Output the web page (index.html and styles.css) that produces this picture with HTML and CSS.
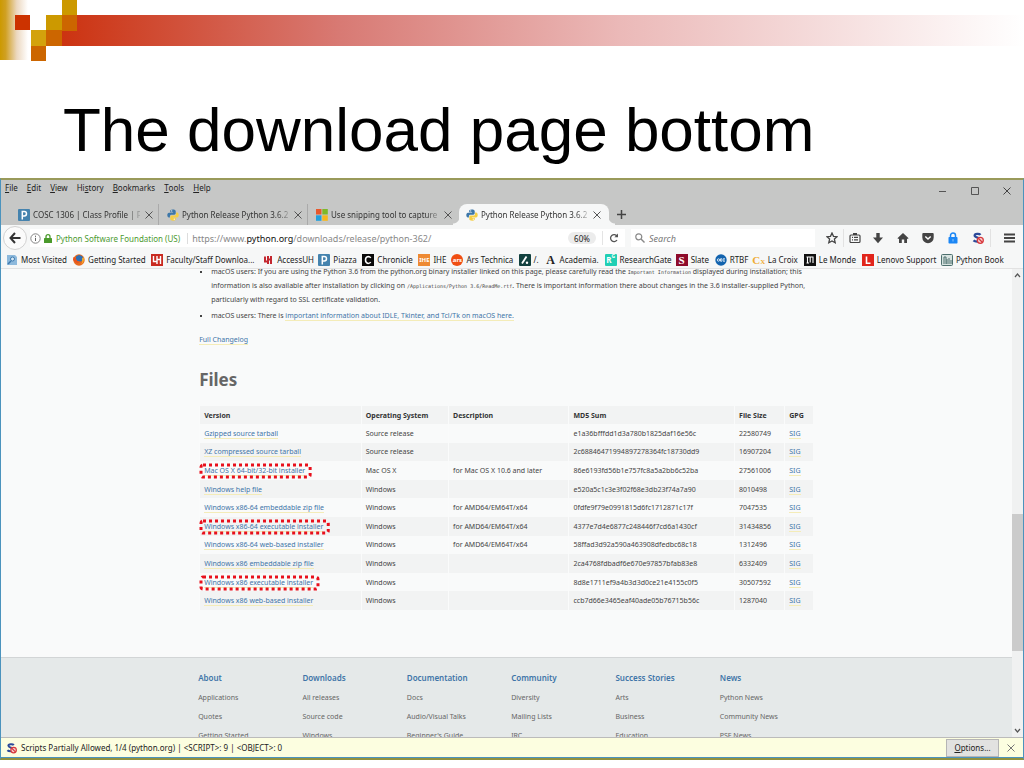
FILE: index.html
```html
<!DOCTYPE html>
<html lang="en">
<head>
<meta charset="utf-8">
<title>The download page bottom</title>
<link rel="stylesheet" href="styles.css">
</head>
<body>
<svg class="defs" aria-hidden="true">
  <symbol id="python" viewBox="0 0 12 12">
    <path fill="#3d77a8" d="M5.800.400C3.400.400 3.200 1.200 3.200 2v1.200h2.900v.500H2C.900 3.700.300 4.700.300 6.100s.600 2.500 1.600 2.500h1V7.200c0-.900.700-1.500 1.500-1.500h2.900c.800 0 1.400-.600 1.400-1.400V2C8.700 1 7.600.400 5.800.400z"/>
    <path fill="#f5cf45" d="M6.200 11.700c2.400 0 2.600-.8 2.600-1.600V8.900H5.900v-.5H10c1.100 0 1.700-1 1.700-2.400S11.100 3.500 10.100 3.500h-1v1.400c0 .9-.7 1.500-1.500 1.500H4.700c-.8 0-1.400.6-1.400 1.400v2.300c0 1 1.100 1.600 2.900 1.600z"/>
    <circle cx="4.700" cy="1.900" r=".6" fill="#fff"/><circle cx="7.300" cy="10.200" r=".6" fill="#fff"/>
  </symbol>
  <symbol id="piazza" viewBox="0 0 12 12">
    <rect width="12" height="12" rx="1" fill="#4583ae"/>
    <path d="M4.300 10.500V2.500h2a2.200 2.200 0 0 1 0 4.400H4.300" fill="none" stroke="#fff" stroke-width="1.500"/>
  </symbol>
  <symbol id="close" viewBox="0 0 8 8"><path d="M.5.5l7 7M7.500.5l-7 7" stroke="currentColor" fill="none"/></symbol>
  <symbol id="noscript" viewBox="0 0 12 12">
    <path d="M8.500 2.800C7.500 1.400 2.600 1.300 2.600 3.600S8.400 5.400 8.400 7.800 3 9.900 1.500 8.400" fill="none" stroke="#2c4a9a" stroke-width="2.200"/>
    <circle cx="8.300" cy="8.300" r="3" fill="#f6d5d5" stroke="#d8393d" stroke-width="1.300"/>
    <path d="M6.300 6.300l4 4" stroke="#d8393d" stroke-width="1.300"/>
  </symbol>
</svg>

<main class="slide">
  <header class="slide-head">
    <svg class="blocks" width="78" height="62" viewBox="0 0 78 62" aria-hidden="true">
      <defs><linearGradient id="gold"><stop offset="0" stop-color="#cc9900"/><stop offset=".2" stop-color="#d0a022"/><stop offset=".6" stop-color="#ecd8c0"/><stop offset="1" stop-color="#fff"/></linearGradient></defs>
      <rect width="28" height="60" fill="url(#gold)"/>
      <path fill="#cc3300" d="M15 15h15v15H15z"/>
      <path fill="#cc9900" d="M62 0h15v15H62zM46 15h16v15H46z"/>
      <path fill="#d3a20c" d="M31 30h15v16H31z"/>
      <path fill="#cc6600" d="M62 15h15v16H62zM46 30h16v16H46zM31 46h15v15H31z"/>
    </svg>
    <div class="bar"></div>
  </header>
  <h1 class="title">The download page bottom</h1>

  <section class="browser">
    <div class="chrome">
      <div class="menubar">
        <nav class="menus">
          <button><u>F</u>ile</button><button><u>E</u>dit</button><button><u>V</u>iew</button><button>Hi<u>s</u>tory</button><button><u>B</u>ookmarks</button><button><u>T</u>ools</button><button><u>H</u>elp</button>
        </nav>
        <div class="win">
          <button aria-label="Minimize"><svg width="8" height="8"><path d="M0 4.500h7" stroke="#555"/></svg></button>
          <button aria-label="Maximize"><svg width="8" height="8"><path d="M.5.5h7v7h-7z" fill="none" stroke="#555"/></svg></button>
          <button aria-label="Close window"><svg width="8" height="8"><use href="#close"/></svg></button>
        </div>
      </div>
      <div class="tabs">
        <div class="tab"><svg class="ico"><use href="#piazza"/></svg><span>COSC 1306 | Class Profile | P</span><button aria-label="Close tab"><svg width="8" height="8"><use href="#close"/></svg></button></div>
        <div class="tab"><svg class="ico"><use href="#python"/></svg><span>Python Release Python 3.6.2</span><button aria-label="Close tab"><svg width="8" height="8"><use href="#close"/></svg></button></div>
        <div class="tab"><svg class="ico" viewBox="0 0 12 12"><path fill="#e8582c" d="M0 0h5.500v5.500H0z"/><path fill="#7db928" d="M6.300 0h5.500v5.500H6.300z"/><path fill="#23a0dc" d="M0 6.300h5.500v5.500H0z"/><path fill="#f7b71c" d="M6.300 6.300h5.500v5.500H6.300z"/></svg><span>Use snipping tool to capture</span><button aria-label="Close tab"><svg width="8" height="8"><use href="#close"/></svg></button></div>
        <div class="tab active"><svg class="ico"><use href="#python"/></svg><span>Python Release Python 3.6.2</span><button aria-label="Close tab"><svg width="8" height="8"><use href="#close"/></svg></button></div>
        <button class="newtab" aria-label="New tab"><svg width="9" height="9"><path d="M4.500 0v9M0 4.500h9" stroke="#444" stroke-width="1.500"/></svg></button>
      </div>
    </div>

    <div class="toolbar">
      <button class="back" aria-label="Back"><svg width="12" height="12" viewBox="0 0 12 12"><path d="M6 1L1.500 6 6 11M2 6h9.500" fill="none" stroke="#333" stroke-width="2"/></svg></button>
      <div class="urlbar">
        <svg width="11" height="11" viewBox="0 0 11 11"><circle cx="5.500" cy="5.500" r="4.700" fill="none" stroke="#777" stroke-width=".9"/><path d="M5.500 4.800v3.200M5.500 2.700v1.200" stroke="#666"/></svg>
        <svg width="8" height="9" viewBox="0 0 8 9"><rect y="4" width="8" height="5" rx=".6" fill="#4a9a2c"/><path d="M2 4V2.700a2 2 0 0 1 4 0V4" fill="none" stroke="#4a9a2c" stroke-width="1.300"/></svg>
        <span class="owner">Python Software Foundation (US)</span>
        <div class="url" role="textbox" aria-label="Address">https://www.<b>python.org</b>/downloads/release/python-362/</div>
        <button class="zoom">60%</button>
        <button class="reload" aria-label="Reload"><svg width="10" height="10" viewBox="0 0 10 10"><path d="M8 3.200A3.500 3.500 0 1 0 8 7" fill="none" stroke="#555" stroke-width="1.300"/><path d="M9 .6v3.600H5.400z" fill="#555"/></svg></button>
      </div>
      <label class="search"><svg width="10" height="10" viewBox="0 0 10 10"><circle cx="3.800" cy="3.800" r="3" fill="none" stroke="#888" stroke-width="1.200"/><path d="M6 6l3.500 3.500" stroke="#888" stroke-width="1.400"/></svg><input type="text" placeholder="Search" aria-label="Search"></label>
      <div class="tools">
        <button class="narrow" aria-label="Bookmark this page"><svg width="12" height="12" viewBox="0 0 12 12"><path d="M6 1l1.500 3.300 3.600.4-2.700 2.400.8 3.600L6 8.900l-3.200 1.800.8-3.600L.9 4.700l3.600-.4z" fill="none" stroke="#444" stroke-width="1.300"/></svg></button>
        <button class="narrow sep" aria-label="Bookmarks list"><svg width="12" height="12" viewBox="0 0 12 12"><rect x="1" y="3" width="10" height="7.500" rx="1" fill="none" stroke="#444" stroke-width="1.200"/><path d="M4 1h4v2H4z" fill="#444"/><path d="M3 5.300h1M5 5.300h4M3 7.800h1M5 7.800h4" stroke="#444" stroke-width="1.200"/></svg></button>
        <button aria-label="Downloads"><svg width="12" height="12" viewBox="0 0 12 12"><path d="M4.300 1h3.400v4.500H11l-5 5.700-5-5.700h3.300z" fill="#444"/></svg></button>
        <button aria-label="Home"><svg width="12" height="12" viewBox="0 0 12 12"><path d="M6 1l5.600 5.200-1 .9L10 6.600V11H7.200V7.500H4.800V11H2V6.600l-.6.5-1-.9z" fill="#444"/></svg></button>
        <button aria-label="Pocket"><svg width="12" height="12" viewBox="0 0 12 12"><path d="M1.300 1h9.400q1 0 1 1v3.500a5.700 5.700 0 0 1-11.400 0V2q0-1 1-1z" fill="#444"/><path d="M3.300 4.500L6 7l2.700-2.500" fill="none" stroke="#fff" stroke-width="1.500"/></svg></button>
        <button aria-label="Secure login"><svg width="12" height="12" viewBox="0 0 12 12"><rect x="1.500" y="5" width="9" height="6.500" rx=".7" fill="#1a86f5"/><path d="M3.500 5V3.500a2.500 2.500 0 0 1 5 0V5" fill="none" stroke="#1a86f5" stroke-width="1.500"/><path d="M6 7v2.500" stroke="#8cc4fb"/></svg></button>
        <button aria-label="NoScript"><svg width="12" height="12"><use href="#noscript"/></svg></button>
        <button class="sep wide" aria-label="Open menu"><svg width="12" height="12"><path d="M1 2.500h11M1 6h11M1 9.500h11" stroke="#444" stroke-width="2"/></svg></button>
      </div>
    </div>

    <nav class="bookmarks">
      <a href="#"><svg class="ico" viewBox="0 0 12 12"><path d="M1 1h8l2 2v8H1z" fill="#8db9dc"/><circle cx="6.500" cy="5" r="2" fill="#d8eaf7" stroke="#3d79ad"/><path d="M5 7l-3 3" stroke="#3d79ad" stroke-width="1.500"/></svg>Most Visited</a>
      <a href="#"><svg class="ico" viewBox="0 0 12 12"><circle cx="6" cy="6" r="5.700" fill="#e66a1f"/><path d="M3 2.500Q6-.5 9.500 2.500 11 6 8 7.500 4 8 3 5z" fill="#2f6fb3"/><path d="M.5 3l2.200 1Q3 7.500 6.500 8 4 11-.1 6z" fill="#e8521c"/><path d="M10.500 3q1.500 5-2.500 7.500 2-3 1-6z" fill="#f7b52d"/></svg>Getting Started</a>
      <a href="#"><svg class="ico" viewBox="0 0 12 12"><rect width="12" height="12" fill="#c92a20"/><path d="M2.500 2v5.500h3.500V4M6 10V2M6 5.500h3.500V10M9.500 2v3" fill="none" stroke="#fff" stroke-width="1.400"/></svg>Faculty/Staff Downloa...</a>
      <a href="#"><svg class="ico" viewBox="0 0 12 12"><path d="M3 2.500v5h3V3M6 10V2M6 5.500h3V10M9 2v3" fill="none" stroke="#c3272f" stroke-width="2"/></svg>AccessUH</a>
      <a href="#"><svg class="ico"><use href="#piazza"/></svg>Piazza</a>
      <a href="#"><svg class="ico" viewBox="0 0 12 12"><rect width="12" height="12" fill="#0a0a0a"/><path d="M8.700 4Q8 2.600 6.200 2.600 3.500 3 3.500 6t2.700 3.400Q8 9.400 8.700 8" fill="none" stroke="#fff" stroke-width="1.500"/></svg>Chronicle</a>
      <a href="#"><span class="ico mark ihe">IHE</span>IHE</a>
      <a href="#"><span class="ico mark ars">ars</span>Ars Technica</a>
      <a href="#"><svg class="ico" viewBox="0 0 12 12"><rect width="12" height="12" rx="1" fill="#12413f"/><path d="M3 9.500L7.500 2.500" stroke="#fff" stroke-width="1.800"/><circle cx="8" cy="8.800" r="1.200" fill="#fff"/></svg>/.</a>
      <a href="#"><span class="ico mark academia">A</span>Academia.</a>
      <a href="#"><span class="ico mark rg">R<sup>G</sup></span>ResearchGate</a>
      <a href="#"><span class="ico mark slate">S</span>Slate</a>
      <a href="#"><svg class="ico" viewBox="0 0 12 12"><circle cx="6" cy="6" r="5.700" fill="#1263ae"/><circle cx="3.500" cy="6" r="1.200" fill="none" stroke="#fff" stroke-width=".8"/><path d="M5.500 4.800v2.400h1.500V4.800zM8 4.800h2M8 7.200h2M8 6h1.500" fill="none" stroke="#fff" stroke-width=".8"/></svg>RTBF</a>
      <a href="#"><span class="ico mark croix">C<sub>X</sub></span>La Croix</a>
      <a href="#"><svg class="ico" viewBox="0 0 12 12"><rect width="12" height="12" fill="#111"/><path d="M2.500 3h7M3.500 3v6M6.200 3v5.500M9 3v6M2.500 9h2.500" fill="none" stroke="#fff" stroke-width="1.100"/></svg>Le Monde</a>
      <a href="#"><svg class="ico" viewBox="0 0 12 12"><rect width="12" height="12" fill="#e1251b"/><path d="M4.500 2.500v6.700h4" fill="none" stroke="#fff" stroke-width="1.600"/></svg>Lenovo Support</a>
      <a href="#"><svg class="ico" viewBox="0 0 12 12"><rect x=".5" y=".5" width="11" height="11" rx="1" fill="#d7e3e0" stroke="#4d6f6d"/><path d="M3 10V3h2v7M6 10V5M8 10V4M10 10V6" fill="none" stroke="#4d6f6d"/></svg>Python Book</a>
    </nav>

    <div class="viewport">
      <div class="page">
        <article class="content">
          <ul class="notes">
            <li>macOS users: If you are using the Python 3.6 from the python.org binary installer linked on this page, please carefully read the <code>Important Information</code> displayed during installation; this<br>information is also available after installation by clicking on <code>/Applications/Python 3.6/ReadMe.rtf</code>. There is important information there about changes in the 3.6 installer-supplied Python,<br>particularly with regard to SSL certificate validation.</li>
            <li>macOS users: There is <a href="#">important information about IDLE, Tkinter, and Tcl/Tk on macOS here.</a></li>
          </ul>
          <p class="changelog"><a href="#">Full Changelog</a></p>
          <h2>Files</h2>
          <table>
            <colgroup><col class="c1"><col class="c2"><col class="c3"><col class="c4"><col class="c5"><col class="c6"></colgroup>
            <thead><tr><th>Version</th><th>Operating System</th><th>Description</th><th>MD5 Sum</th><th>File Size</th><th>GPG</th></tr></thead>
            <tbody>
              <tr><td><a href="#">Gzipped source tarball</a></td><td>Source release</td><td></td><td>e1a36bfffdd1d3a780b1825daf16e56c</td><td>22580749</td><td><a href="#">SIG</a></td></tr>
              <tr><td><a href="#">XZ compressed source tarball</a></td><td>Source release</td><td></td><td>2c68846471994897278364fc18730dd9</td><td>16907204</td><td><a href="#">SIG</a></td></tr>
              <tr><td><span class="ring"><a href="#">Mac OS X 64-bit/32-bit installer</a><svg><rect x="2" y="2" rx="2"/></svg></span></td><td>Mac OS X</td><td>for Mac OS X 10.6 and later</td><td>86e6193fd56b1e757fc8a5a2bb6c52ba</td><td>27561006</td><td><a href="#">SIG</a></td></tr>
              <tr><td><a href="#">Windows help file</a></td><td>Windows</td><td></td><td>e520a5c1c3e3f02f68e3db23f74a7a90</td><td>8010498</td><td><a href="#">SIG</a></td></tr>
              <tr><td><a href="#">Windows x86-64 embeddable zip file</a></td><td>Windows</td><td>for AMD64/EM64T/x64</td><td>0fdfe9f79e0991815d6fc1712871c17f</td><td>7047535</td><td><a href="#">SIG</a></td></tr>
              <tr><td><span class="ring"><a href="#">Windows x86-64 executable installer</a><svg><rect x="2" y="2" rx="2"/></svg></span></td><td>Windows</td><td>for AMD64/EM64T/x64</td><td>4377e7d4e6877c248446f7cd6a1430cf</td><td>31434856</td><td><a href="#">SIG</a></td></tr>
              <tr><td><a href="#">Windows x86-64 web-based installer</a></td><td>Windows</td><td>for AMD64/EM64T/x64</td><td>58ffad3d92a590a463908dfedbc68c18</td><td>1312496</td><td><a href="#">SIG</a></td></tr>
              <tr><td><a href="#">Windows x86 embeddable zip file</a></td><td>Windows</td><td></td><td>2ca4768fdbadf6e670e97857bfab83e8</td><td>6332409</td><td><a href="#">SIG</a></td></tr>
              <tr><td><span class="ring"><a href="#">Windows x86 executable installer</a><svg><rect x="2" y="2" rx="2"/></svg></span></td><td>Windows</td><td></td><td>8d8e1711ef9a4b3d3d0ce21e4155c0f5</td><td>30507592</td><td><a href="#">SIG</a></td></tr>
              <tr><td><a href="#">Windows x86 web-based installer</a></td><td>Windows</td><td></td><td>ccb7d66e3465eaf40ade05b76715b56c</td><td>1287040</td><td><a href="#">SIG</a></td></tr>
            </tbody>
          </table>
        </article>
        <footer class="site-foot">
          <div class="foot-cols">
            <section><h3><a href="#">About</a></h3><a href="#">Applications</a><a href="#">Quotes</a><a href="#">Getting Started</a></section>
            <section><h3><a href="#">Downloads</a></h3><a href="#">All releases</a><a href="#">Source code</a><a href="#">Windows</a></section>
            <section><h3><a href="#">Documentation</a></h3><a href="#">Docs</a><a href="#">Audio/Visual Talks</a><a href="#">Beginner's Guide</a></section>
            <section><h3><a href="#">Community</a></h3><a href="#">Diversity</a><a href="#">Mailing Lists</a><a href="#">IRC</a></section>
            <section><h3><a href="#">Success Stories</a></h3><a href="#">Arts</a><a href="#">Business</a><a href="#">Education</a></section>
            <section><h3><a href="#">News</a></h3><a href="#">Python News</a><a href="#">Community News</a><a href="#">PSF News</a></section>
          </div>
        </footer>
      </div>
      <div class="scroll" aria-hidden="true">
        <svg width="7" height="5"><path d="M1 4l2.500-3L6 4" fill="none" stroke="#555" stroke-width="1.200"/></svg>
        <div class="track"><div class="thumb"></div></div>
        <svg width="7" height="5"><path d="M1 1l2.500 3L6 1" fill="none" stroke="#555" stroke-width="1.200"/></svg>
      </div>
    </div>

    <div class="notice">
      <svg width="11" height="12"><use href="#noscript"/></svg>
      <span>Scripts Partially Allowed, 1/4 (python.org) | &lt;SCRIPT&gt;: 9 | &lt;OBJECT&gt;: 0</span>
      <button class="options"><u>O</u>ptions...</button>
      <button class="dismiss" aria-label="Dismiss"><svg width="8" height="8"><use href="#close"/></svg></button>
    </div>
  </section>
</main>
</body>
</html>
```
FILE: styles.css
```css
* { box-sizing: border-box; }
body { margin: 0; background: #fff; font-family: "Noto Sans", "Open Sans", sans-serif; font-size: 8px; color: #222; }
button { margin: 0; padding: 0; border: 0; background: none; font: inherit; color: inherit; display: flex; align-items: center; justify-content: center; }
button u { text-underline-offset: 1px; }
a { text-decoration: none; }
svg { flex: none; display: block; }
.defs { position: absolute; width: 0; height: 0; }

.slide { display: flex; flex-direction: column; height: 100vh; padding-bottom: 8px; }
.slide-head { display: flex; align-items: flex-start; height: 62px; }
.blocks { z-index: 1; }
.bar { flex: 1; height: 31px; margin: 15px 0 0 -16px; background: linear-gradient(90deg, #cc3311 0, #d87a74 29%, #ebb9b8 58%, #fff 100%); }
.title { margin: 0; padding: 32px 63px 12px; font: 400 62px/72px "Liberation Sans", Arial, sans-serif; color: #000; white-space: nowrap; }

.browser { flex: 1; min-height: 0; display: flex; flex-direction: column; border: 1px solid #4b93bd; border-top: 2px solid #999a5a; border-bottom: 2px solid #91913e; }
.chrome { background: #c6c7c6; display: flex; flex-direction: column; }
.menubar { display: flex; justify-content: space-between; height: 24px; }
.menus { display: flex; gap: 9px; height: 14px; padding-left: 4px; }
.win { display: flex; gap: 24px; height: 21px; padding-right: 12px; color: #444; }
.tabs { display: flex; align-items: stretch; height: 21px; padding-left: 9px; }
.tab { position: relative; flex: 0 1 149px; min-width: 0; display: flex; align-items: center; gap: 3px; padding: 0 5px 0 8px; color: #333; }
.tab span { flex: 1; min-width: 0; overflow: hidden; white-space: nowrap; mask-image: linear-gradient(90deg, #000 88%, transparent 104%); }
.tab button { color: #555; margin-left: 2px; }
.tab:nth-child(-n+2) { border-right: 1px solid #aaa; }
.tab.active { flex-basis: 150px; background: #f6f7f7; border-radius: 8px 8px 0 0; padding-left: 7px; padding-right: 8px; margin-left: 2px; }
.tab.active::before, .tab.active::after { content: ""; position: absolute; bottom: 0; width: 6px; height: 8px; }
.tab.active::before { left: -6px; background: radial-gradient(circle at 0 0, transparent 6px, #f6f7f7 7px); }
.tab.active::after { right: -6px; background: radial-gradient(circle at 100% 0, transparent 6px, #f6f7f7 7px); }
.newtab { margin-left: 8px; }
.ico { width: 12px; height: 12px; flex: none; }

.toolbar { display: flex; align-items: center; gap: 6px; height: 26px; padding: 0 2px; background: #f6f7f7; }
.back { width: 24px; height: 24px; border: 1px solid #d2d2d2; border-radius: 50%; background: #fbfbfb; }
.urlbar { flex: 1; display: flex; align-items: center; gap: 3px; height: 18px; background: #fff; margin-left: -3px; }
.owner { color: #4c9a2f; margin-left: 1px; padding-right: 7px; border-right: 1px solid #ddd; white-space: nowrap; }
.url { flex: 1; padding-left: 1px; font-size: 9px; color: #888; white-space: nowrap; }
.url b { font-weight: 400; color: #111; }
.zoom { width: 28px; height: 12px; border-radius: 6px; background: #ececec; }
.reload { width: 23px; height: 14px; border-left: 1px solid #e4e4e4; margin-left: 3px; }
.search { width: 184px; height: 18px; display: flex; align-items: center; gap: 4px; padding-left: 4px; background: #fff; }
.search input { flex: 1; min-width: 0; border: 0; padding: 0; background: none; font: italic 9px "Noto Sans", sans-serif; }
.search input::placeholder { color: #777; opacity: 1; }
.tools { display: flex; align-items: center; }
.tools button { width: 25px; height: 18px; }
.tools .narrow { width: 22px; }
.tools .wide { width: 31px; padding-left: 5px; }
.tools .sep { border-left: 1px solid #e2e2e2; }

.bookmarks { display: grid; grid-template-columns: 67fr 78fr 111fr 56fr 44fr 56fr 33fr 67fr 26fr 60fr 71fr 39fr 38fr 51fr 58fr 79fr 82fr; align-items: center; height: 18px; padding-left: 5px; background: #f6f7f7; border-bottom: 1px solid #e2e2e2; }
.bookmarks a { display: flex; align-items: center; gap: 3px; min-width: 0; color: #222; white-space: nowrap; }
.mark { display: flex; align-items: center; justify-content: center; color: #fff; font-weight: 700; line-height: 12px; }
.ihe { background: #ee8a33; font-size: 6px; }
.ars { background: #f04e12; border-radius: 50%; font-size: 6px; }
.academia { color: #222; font: 700 12px/12px "Liberation Serif", serif; }
.rg { background: #20cfb4; border-radius: 1px; font-size: 8px; }
.rg sup { font-size: 5px; line-height: 5px; align-self: flex-start; }
.slate { background: #8e0b2b; font: 700 11px/12px "Liberation Serif", serif; }
.croix { color: #efab33; font: 700 11px/12px "Liberation Serif", serif; }
.croix sub { font-size: 7px; line-height: 7px; align-self: flex-end; }

.viewport { flex: 1; min-height: 0; display: flex; overflow: hidden; background: #f9fafa; }
.page { flex: 1; min-width: 0; overflow: hidden; font-size: 7px; color: #444; }
.content { width: 61%; padding-left: 1px; padding-right: 2px; margin: -4px auto 0; }
.content a { color: #3f75a8; border-bottom: 1px solid #f4ecb8; line-height: 8px; display: inline-block; }
.notes { margin: 0; padding: 0 0 0 12px; list-style: square; line-height: 14px; white-space: nowrap; }
.notes li + li { margin-top: 2px; }
code { font: 5px "DejaVu Sans Mono", monospace; }
.changelog { margin: 10px 0 0; line-height: 14px; }
h2 { margin: 20px 0 13px; font-size: 17px; line-height: 26px; font-weight: 700; color: #666; }
table { width: 100%; height: 204px; table-layout: fixed; border-collapse: collapse; background: #f9fafa; }
.c1 { width: 161px; } .c2 { width: 87px; } .c3 { width: 120px; } .c4 { width: 27%; } .c5 { width: 50px; } .c6 { width: 28px; }
th, td { height: 18px; padding: 1px 0 0 4px; text-align: left; white-space: nowrap; line-height: 12px; border-left: 1px solid #fafbfb; }
th { color: #333; }
thead tr, tbody tr:nth-child(even) { background: #f2f3f3; }
.ring { position: relative; display: inline-block; }
.ring svg { position: absolute; left: -5px; top: -2px; width: calc(100% + 12px); height: 16px; overflow: visible; }
.ring rect { width: calc(100% - 4px); height: 12px; fill: none; stroke: #e8101c; stroke-width: 3px; stroke-dasharray: 3 3; }

.site-foot { margin-top: 47px; padding-top: 14px; height: 120px; background: #e5e9e9; border-top: 1px solid #d2d5d6; }
.foot-cols { width: 61%; padding-right: 3px; margin: 0 auto; display: grid; grid-template-columns: repeat(6, 17%); }
.foot-cols section { display: flex; flex-direction: column; }
.foot-cols section > a { color: #666; line-height: 19px; }
h3 { margin: 0 0 4px; font-size: 8px; line-height: 12px; font-weight: 600; }
h3 a { color: #3f75a8; }

.scroll { width: 11px; display: flex; flex-direction: column; align-items: center; padding: 4px 0; background: #f0f1f1; }
.track { flex: 1; align-self: stretch; margin: 4px 0; display: flex; flex-direction: column; }
.thumb { height: 31%; margin-top: auto; margin-bottom: 73px; background: #cbcbcb; }

.notice { display: flex; align-items: center; gap: 4px; height: 21px; padding: 0 8px 0 5px; background: #fcfee0; border-top: 1px solid #bbb; border-bottom: 1px solid #4b93bd; }
.notice span { flex: 1; white-space: nowrap; }
.options { width: 53px; height: 18px; border: 1px solid #b5b5b5; background: #e2e2e0; }
.dismiss { margin-left: 4px; color: #777; }
```
